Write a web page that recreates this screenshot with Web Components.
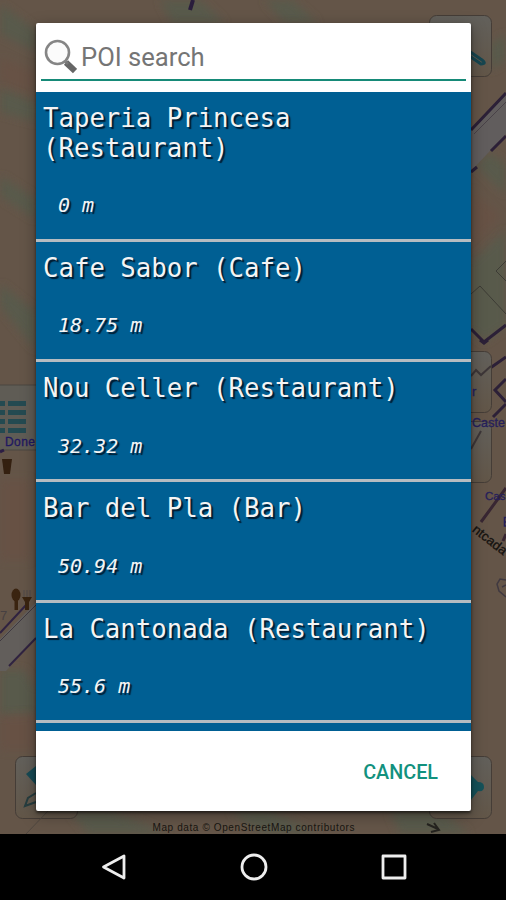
<!DOCTYPE html>
<html lang="en">
<head>
<meta charset="utf-8">
<title>POI search</title>
<style>
    html, body { margin: 0; height: 100%; background: #000; overflow: hidden; }
</style>
</head>
<body>
<poi-screen>
    <map-view slot="map"></map-view>
    <poi-dialog>
        <search-field slot="search" hint="POI search"></search-field>
        <poi-row name="Taperia Princesa (Restaurant)" distance="0 m"></poi-row>
        <poi-row name="Cafe Sabor (Cafe)" distance="18.75 m"></poi-row>
        <poi-row name="Nou Celler (Restaurant)" distance="32.32 m"></poi-row>
        <poi-row name="Bar del Pla (Bar)" distance="50.94 m"></poi-row>
        <poi-row name="La Cantonada (Restaurant)" distance="55.6 m"></poi-row>
        <text-button slot="actions">CANCEL</text-button>
    </poi-dialog>
    <nav-bar slot="nav"></nav-bar>
</poi-screen>

<script>
class PoiElement extends HTMLElement {
    constructor() {
        super();
        this.attachShadow({ mode: 'open' });
        this.shadowRoot.innerHTML = this.constructor.html;
    }
}

class PoiScreen extends PoiElement {
    static html = `
        <style>
            :host{display: flex;flex-direction: column;width: 506px;height: 900px;overflow: hidden;position: relative;font-family: Roboto, sans-serif;}
            .map{position: absolute;left: 0;top: 0;}
            main{height: 834px;box-sizing: border-box;padding: 23px 35px 23px 36px;display: flex;position: relative;}
            ::slotted(poi-dialog){flex: 1;min-width: 0;}
        </style>
        <div class="map"><slot name="map"></slot></div>
        <main><slot></slot></main>
        <slot name="nav"></slot>
    `;
}

// Dimmed map that stays visible round the dialog
class MapView extends PoiElement {
    static html = `
        <style>
            :host{display: block;width: 506px;height: 834px;}
            svg{display: block;}
            text{font-family: "Liberation Sans", sans-serif;}
        </style>
        <svg width="506" height="834" viewBox="0 0 506 834">
            <defs>
                <linearGradient id="key" x1="0" y1="0" x2="0" y2="1">
                    <stop offset="0" stop-color="#62605b"/>
                    <stop offset="1" stop-color="#625648"/>
                </linearGradient>
                <filter id="soft"><feGaussianBlur stdDeviation="4"/></filter>
            </defs>
            <rect width="506" height="834" fill="#645548"/>
            <g fill="#595a4b" filter="url(#soft)">
                <path d="M0 4L36 30V52L0 34zM0 88L36 103V122L0 112zM0 176L36 199V219L0 196zM0 284L36 312V350L0 306z"/>
                <path d="M160 0H200L225 23H172zM264 0H292L318 23H285zM490 45L506 34V60L490 70z"/>
                <path d="M476 166L488 152L506 164V194L492 182zM471 262L506 230V326L484 342L471 330z"/>
                <path d="M0 670H24L36 690V712L0 716zM70 811H110L170 834H88zM230 811H270L320 834H262zM390 811H440L470 834H400z"/>
            </g>
            <g fill="#6a4f43" opacity=".5" filter="url(#soft)">
                <path d="M0 58L36 72V94L0 82zM471 190L500 216L471 250zM0 480H30V560H0zM0 715H36V750H0z"/>
            </g>
            <path d="M193 0L190 10" stroke="#2a1d3c" stroke-width="4"/>

            <!-- streets on the right -->
            <path d="M471 130L506 93V134L471 171z" fill="#615d5d"/>
            <g fill="none" stroke="#2c2037">
                <path d="M471 130L506 93M491 151L506 136M471 172L477 167" stroke-width="3"/>
                <path d="M474 134L506 102" stroke="#494248"/>
                <path d="M471 329L484 342L506 325" stroke-width="3"/>
                <path d="M471 294L480 286L506 314M506 261L496 271L506 281" stroke="#3d3c35"/>
                <path d="M506 357L486 371M506 379L495 390L506 402M493 417L506 404M480 340L484 343L488 340" stroke-width="3"/>
                <path d="M481 522L506 488M503 541L506 534" stroke="#382632" stroke-width="3"/>
            </g>

            <!-- map keys -->
            <g fill="url(#key)" stroke="#453d37">
                <rect x="429.500" y="15.500" width="62" height="61" rx="7"/>
                <rect x="429.500" y="351.500" width="62" height="61" rx="7"/>
                <rect x="429.500" y="421.500" width="62" height="61" rx="7"/>
                <rect x="429.500" y="756.500" width="62" height="62" rx="7"/>
                <rect x="15.500" y="756.500" width="62" height="62" rx="7"/>
            </g>
            <path d="M466 49L482 60Q487 64 481 64L468 55" fill="none" stroke="#164650" stroke-width="3" stroke-linecap="round"/>
            <path d="M471 376L476 370L481 375L491 366" fill="none" stroke="#3d3638" stroke-width="2"/>
            <path d="M471 449L481 431" stroke="#3d3638" stroke-width="2"/>
            <text x="472" y="396" font-size="13" fill="#25205f" stroke="#25205f" stroke-width=".3">r</text>
            <path d="M471 775L478 782Q484 782 484 787Q484 792 478 791L471 800z" fill="#15525a"/>
            <path d="M36 766L26 774L36 785z" fill="#164a55"/>
            <path d="M36 793L28 798L25 806L36 802" fill="none" stroke="#263d3f" stroke-width="2"/>
            <path d="M26 834L48 811" stroke="#504840"/>

            <!-- list key -->
            <rect x="-4" y="385" width="44" height="65" fill="#5f5c55" stroke="#4b4740"/>
            <path d="M0 401H5V406H0zM8 401H26V406H8zM0 410H5V415H0zM8 410H26V415H8zM0 419H5V424H0zM8 419H26V424H8zM0 428H5V433H0zM8 428H26V433H8z" fill="#244a51"/>
            <text x="5" y="446" font-size="12" textLength="30" fill="#211861" stroke="#211861" stroke-width=".3">Done</text>
            <path d="M0 452L4 450" stroke="#2c1d43" stroke-width="3"/>
            <path d="M2 459H12L10 474H4z" fill="#342010"/>

            <!-- street and symbols on the left -->
            <path d="M0 639L36 602V638L6 671H0z" fill="#625e5b"/>
            <path d="M0 633L27 604M9 666L36 638" stroke="#302340" stroke-width="2"/>
            <path d="M0 641L36 605" stroke="#3f383f"/>
            <g fill="#3a2410">
                <ellipse cx="16" cy="595" rx="4.500" ry="6.500"/>
                <path d="M14.500 599H18V610H14.500zM22 597H32L29 602V610H25V602z"/>
            </g>
            <path d="M24 590V597M27 590V597M30 590V597" stroke="#504b48"/>
            <text x="0" y="620" font-size="13" fill="#474041">7</text>

            <g font-size="12.500" fill="#26205b" stroke="#26205b" stroke-width=".3">
                <text x="472" y="427" textLength="33">Caste</text>
                <text x="485" y="500" font-size="11.500">Cas</text>
            </g>
            <path d="M506 517.500H504.500V526H506M504.500 522H506" fill="none" stroke="#26205b" stroke-width="1.500"/>
            <text transform="translate(471.500 531) rotate(38)" font-size="13" textLength="40" lengthAdjust="spacingAndGlyphs" fill="#14120f" stroke="#14120f" stroke-width=".3">ntcada</text>
            <path d="M506 580L500 579L497 584L499 591L506 597M506 585L502 587" fill="none" stroke="#403940" stroke-width="1.500"/>

            <text x="152.500" y="830.500" font-size="10" fill="#181511" textLength="202">Map data © OpenStreetMap contributors</text>
            <path d="M427 824L438 829M434 823L439 830L431 832" fill="none" stroke="#25231f" stroke-width="2"/>
        </svg>
    `;
}

class PoiDialog extends PoiElement {
    static html = `
        <style>
            :host{display: flex;flex-direction: column;background: #fff;border-radius: 2px;overflow: hidden;box-shadow: 0 2px 3px rgba(0,0,0,.55), 0 4px 15px rgba(0,0,0,.35);}
            .list{height: 639px;background: #005f93;overflow: hidden;}
            .actions{flex: 1;display: flex;align-items: center;justify-content: flex-end;padding: 3px 33px 0 0;}
        </style>
        <slot name="search"></slot>
        <div class="list"><slot></slot></div>
        <div class="actions"><slot name="actions"></slot></div>
    `;
}

class SearchField extends PoiElement {
    static html = `
        <style>
            :host{display: block;height: 69px;box-sizing: border-box;padding: 9px 5px 0;}
            .field{display: flex;align-items: center;height: 47px;border-bottom: 2px solid #168a78;}
            svg{display: block;margin: 2px 0 0 2px;}
            .hint{font-size: 25.6px;line-height: 32px;color: #757575;margin: 3px 0 0 4px;}
        </style>
        <div class="field">
            <svg width="34" height="36" viewBox="0 0 34 36">
                <path d="M23 23.500L32 32" stroke="#666" stroke-width="6"/>
                <path d="M21 21L25 25" stroke="#777" stroke-width="3"/>
                <circle cx="14.500" cy="13.500" r="11.500" fill="#fbfbfb" stroke="#858585" stroke-width="2.600"/>
            </svg>
            <span class="hint"></span>
        </div>
    `;
    connectedCallback() {
        this.shadowRoot.querySelector('.hint').textContent = this.getAttribute('hint');
    }
}

class PoiRow extends PoiElement {
    static html = `
        <style>
            :host{display: block;border-bottom: 3px solid #b5bcc1;padding: 12px 7px 20.8px;color: #f4f4f4;font-family: "DejaVu Sans Mono", monospace;text-shadow: 2px 2px 1px #001b30;}
            .name{font-size: 25.7px;line-height: 29.5px;}
            .distance{font-size: 20px;line-height: 24px;font-style: italic;padding: 30px 0 1px 15px;}
        </style>
        <div class="name"></div>
        <div class="distance"></div>
    `;
    connectedCallback() {
        this.shadowRoot.querySelector('.name').textContent = this.getAttribute('name');
        this.shadowRoot.querySelector('.distance').textContent = this.getAttribute('distance');
    }
}

class TextButton extends PoiElement {
    static html = `
        <style>
            :host{display: block;font-size: 19.8px;line-height: 24px;font-weight: 500;color: #12917e;}
        </style>
        <slot></slot>
    `;
}

class NavBar extends PoiElement {
    static html = `
        <style>
            :host{display: flex;flex: 1;align-items: center;justify-content: center;gap: 112px;padding-left: 1px;background: #000;position: relative;}
            svg{display: block;fill: none;stroke: #eee;stroke-width: 2.8;stroke-linejoin: round;}
        </style>
        <svg width="28" height="28" viewBox="0 0 28 28"><path d="M24 3V25L3.500 14z"/></svg>
        <svg width="28" height="28" viewBox="0 0 28 28"><circle cx="14" cy="14" r="12"/></svg>
        <svg width="28" height="28" viewBox="0 0 28 28"><rect x="3" y="3" width="22" height="22"/></svg>
    `;
}

customElements.define('poi-screen', PoiScreen);
customElements.define('map-view', MapView);
customElements.define('poi-dialog', PoiDialog);
customElements.define('search-field', SearchField);
customElements.define('poi-row', PoiRow);
customElements.define('text-button', TextButton);
customElements.define('nav-bar', NavBar);
</script>
</body>
</html>
